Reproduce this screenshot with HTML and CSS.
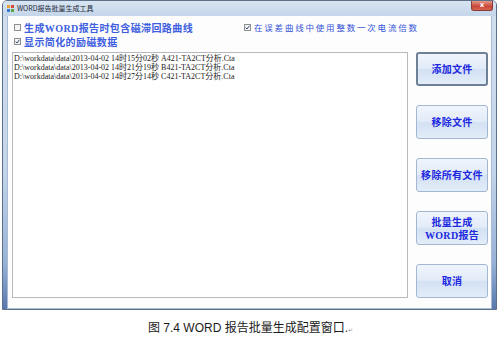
FILE: index.html
```html
<!DOCTYPE html>
<html lang="zh-CN">
<head>
  <meta charset="UTF-8">
  <title>WORD报告批量生成工具</title>
  <link rel="stylesheet" href="styles.css">
</head>
<body>
  <div class="window">
    <div class="titlebar">
      <svg class="app-icon" width="7" height="7" viewBox="0 0 7 7">
        <rect x="0" y="0" width="3" height="3" fill="#e8a23a"/>
        <rect x="4" y="0" width="3" height="3" fill="#d94a3a"/>
        <rect x="0" y="4" width="3" height="3" fill="#3a78d9"/>
        <rect x="4" y="4" width="3" height="3" fill="#5aa83a"/>
      </svg>
      <span class="title">WORD报告批量生成工具</span>
      <div class="close">x</div>
    </div>

    <div class="client">
      <div class="options">
        <label class="opt strong">
          <svg class="cb" width="7" height="7" viewBox="0 0 7 7"><rect x="0.5" y="0.5" width="6" height="6" fill="#f4f4f4" stroke="#8e8f90"/></svg>
          <span>生成<span class="latin">WORD</span>报告时包含磁滞回路曲线</span>
        </label>
        <label class="opt plain">
          <svg class="cb" width="7" height="7" viewBox="0 0 7 7"><rect x="0.5" y="0.5" width="6" height="6" fill="#f4f4f4" stroke="#8e8f90"/><path d="M1.6 3.6 L3 5 L5.4 1.8" fill="none" stroke="#3c4c6c" stroke-width="1"/></svg>
          <span>在误差曲线中使用整数一次电流倍数</span>
        </label>
        <label class="opt strong">
          <svg class="cb" width="7" height="7" viewBox="0 0 7 7"><rect x="0.5" y="0.5" width="6" height="6" fill="#f4f4f4" stroke="#8e8f90"/><path d="M1.6 3.6 L3 5 L5.4 1.8" fill="none" stroke="#3c4c6c" stroke-width="1"/></svg>
          <span>显示简化的励磁数据</span>
        </label>
      </div>

      <div class="main">
        <div class="filelist">
          <div>D:\workdata\data\2013-04-02 14时15分02秒 A421-TA2CT分析.Cta</div>
          <div>D:\workdata\data\2013-04-02 14时21分19秒 B421-TA2CT分析.Cta</div>
          <div>D:\workdata\data\2013-04-02 14时27分14秒 C421-TA2CT分析.Cta</div>
        </div>
        <div class="buttons">
          <button class="btn focused">添加文件</button>
          <button class="btn">移除文件</button>
          <button class="btn">移除所有文件</button>
          <button class="btn two-line">批量生成<br><span class="latin">WORD</span>报告</button>
          <button class="btn">取消</button>
        </div>
      </div>
    </div>
    <div class="frame-bottom"></div>
  </div>

  <p class="caption">图 7.4 WORD 报告批量生成配置窗口.<span class="mark">↵</span></p>
</body>
</html>
```

FILE: styles.css
```css
* {
  margin: 0;
  padding: 0;
  box-sizing: border-box;
}
html, body {
  width: 501px;
  height: 344px;
  background: #fff;
  overflow: hidden;
}
body {
  font-family: 'Noto Sans CJK SC', sans-serif;
}

.window {
  width: 495px;
  height: 310px;
  margin-left: 2px;
  border: 1px solid #5d708a;
  border-radius: 5px 5px 0 0;
  padding: 0 4px;
  display: flex;
  flex-direction: column;
  background: linear-gradient(to bottom, #d2dfee 0%, #c3d5ea 55%, #97b2d6 85%, #5879ad 100%);
}

.titlebar {
  height: 15px;
  display: flex;
  align-items: center;
  gap: 3px;
  padding-left: 3px;
  background: linear-gradient(to bottom, #d8e4f1, #c4d5ea);
  margin: 0 -4px;
  border-radius: 4px 4px 0 0;
}
.app-icon {
  margin-left: 1px;
}
.title {
  font-size: 7px;
  color: #1e2a3a;
  line-height: 15px;
}
.close {
  margin-left: auto;
  margin-right: 3px;
  align-self: flex-start;
  width: 22px;
  height: 10px;
  border: 1px solid #8c3a36;
  border-top: none;
  border-radius: 0 0 3px 3px;
  background: linear-gradient(to bottom, #e49a8a, #c9473a 60%, #d5654f);
  color: #fff;
  font: bold 7px/9px 'DejaVu Sans', sans-serif;
  text-align: center;
}

.client {
  flex: 1;
  background: #fdfdfe;
  border: 1px solid #a9bbd2;
  border-top: none;
  display: flex;
  flex-direction: column;
  padding-top: 4px;
}

.options {
  display: grid;
  grid-template-columns: 230px auto;
  grid-auto-rows: 14px;
  padding-left: 6px;
}
.opt {
  display: flex;
  align-items: center;
  gap: 3px;
  white-space: nowrap;
}
.cb {
  flex: none;
}
.opt.strong {
  font-size: 10px;
  font-weight: bold;
  letter-spacing: 0.4px;
  color: #3d5ede;
}
.opt.plain {
  font-size: 8.5px;
  letter-spacing: 1.8px;
  color: #3352d6;
}
.latin {
  font-family: 'Liberation Serif', 'Noto Sans CJK SC', serif;
  font-weight: bold;
}

.main {
  display: flex;
  gap: 8px;
  margin-top: 4px;
  padding-left: 4px;
  height: 246px;
}
.filelist {
  width: 396px;
  border: 1px solid #b6b9bd;
  background: #fff;
  padding: 1px 1px;
  font-family: 'Liberation Serif', 'Noto Sans CJK SC', serif;
  font-size: 8px;
  line-height: 9px;
  color: #1a1a1a;
  white-space: nowrap;
}

.buttons {
  width: 72px;
  display: flex;
  flex-direction: column;
  justify-content: space-between;
}
.btn {
  height: 34px;
  border: 1px solid #a3b7d0;
  border-radius: 3px;
  background: linear-gradient(to bottom, #f0f5fc 0%, #e2ebf8 48%, #d3e1f4 52%, #e3edf9 100%);
  color: #2028e0;
  font-family: 'Noto Sans CJK SC', sans-serif;
  font-size: 10px;
  font-weight: bold;
  letter-spacing: 0.3px;
  line-height: 12px;
}
.btn.two-line {
  line-height: 13px;
}
.btn.focused {
  border: 2px solid #6d8096;
}

.caption {
  margin-top: 11px;
  text-align: center;
  font-family: 'Liberation Sans', 'Noto Sans CJK SC', sans-serif;
  font-size: 12px;
  line-height: 14px;
  color: #1c1c1c;
}
.mark {
  font-size: 6px;
  color: #999;
}
```
